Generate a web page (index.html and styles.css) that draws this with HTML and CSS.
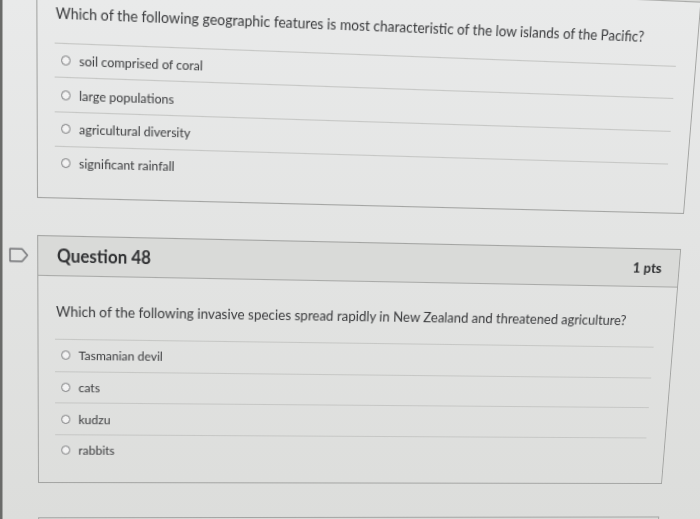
FILE: index.html
```html
<!DOCTYPE html>
<html lang="en">
<head>
<meta charset="utf-8">
<title>Quiz</title>
<link rel="stylesheet" href="styles.css">
</head>
<body>
<div class="screen">
  <section class="question">
    <div class="flag-col"></div>
    <div class="card card-first">
      <div class="card-header"></div>
      <div class="card-body">
        <p class="q-text">Which of the following geographic features is most characteristic of the low islands of the Pacific?</p>
        <ul class="answers">
          <li class="answer"><span class="radio"></span><span class="label">soil comprised of coral</span></li>
          <li class="answer"><span class="radio"></span><span class="label">large populations</span></li>
          <li class="answer"><span class="radio"></span><span class="label">agricultural diversity</span></li>
          <li class="answer"><span class="radio"></span><span class="label">significant rainfall</span></li>
        </ul>
      </div>
    </div>
  </section>
  <section class="question">
    <div class="flag-col">
      <svg class="flag" width="19" height="14" viewBox="0 0 19 14"><path d="M1 1.2 H12.5 L17.6 7 L12.5 12.8 H1 Z" fill="none" stroke="#727376" stroke-width="1.4" stroke-linejoin="round"/></svg>
    </div>
    <div class="card">
      <div class="card-header">
        <h2 class="q-title">Question 48</h2>
        <span class="pts">1 pts</span>
      </div>
      <div class="card-body">
        <p class="q-text">Which of the following invasive species spread rapidly in New Zealand and threatened agriculture?</p>
        <ul class="answers">
          <li class="answer"><span class="radio"></span><span class="label">Tasmanian devil</span></li>
          <li class="answer"><span class="radio"></span><span class="label">cats</span></li>
          <li class="answer"><span class="radio"></span><span class="label">kudzu</span></li>
          <li class="answer"><span class="radio"></span><span class="label">rabbits</span></li>
        </ul>
      </div>
    </div>
  </section>
  <section class="question">
    <div class="flag-col"></div>
    <div class="card">
      <div class="card-header"></div>
    </div>
  </section>
</div>
</body>
</html>
```
FILE: styles.css
```css
html {
  background-color: #e3e4e2;
  background-image:
    linear-gradient(90deg, #6a6b69 0, #6a6b69 2px, rgba(0,0,0,0) 3px),
    linear-gradient(#e9eaea, #dcdddb);
  height: 100%;
}
body {
  margin: 0;
  height: 519px;
  overflow: hidden;
}
.screen {
  width: 690px;
  height: 521px;
  overflow: hidden;
  display: flex;
  flex-direction: column;
  gap: 34px;
  font-family: Lato, "Noto Sans", sans-serif;
  color: #3a3b3d;
  transform-origin: 0 0;
  transform: matrix3d(1.090736, 0.0444631, 0, 0.000088571, 0.0095233, 1.160336, 0, 0.00014880, 0, 0, 1, 0, -5.18483, -42.7834, 0, 1);
  filter: blur(0.3px);
}
.question {
  display: flex;
  flex: none;
}
.flag-col {
  width: 38px;
  flex: none;
  box-sizing: border-box;
  padding: 12px 0 0 11px;
}
.flag {
  display: block;
}
.card {
  width: 650px;
  flex: none;
  box-sizing: border-box;
  border: 1px solid #a3a4a2;
}
.card-first {
  margin-top: -25.3px;
}
.card-header {
  height: 36px;
  display: flex;
  align-items: center;
  justify-content: space-between;
  padding: 0 18px;
  background: #d9dad8;
  border-bottom: 1px solid #a9aaa8;
}
.q-title {
  margin: 0;
  font-size: 16.5px;
  font-weight: 700;
  color: #2f3032;
}
.pts {
  font-size: 14px;
  font-weight: 700;
  color: #2f3032;
}
.card-body {
  padding: 23px 20px 15.4px 16px;
}
.q-text {
  margin: 0 0 16px;
  padding-left: 1px;
  font-size: 13.5px;
  line-height: 20px;
}
.answers {
  list-style: none;
  margin: 0;
  padding: 0;
}
.answer {
  display: flex;
  align-items: center;
  gap: 8px;
  height: 29.7px;
  padding-left: 6px;
  padding-bottom: 1px;
  box-sizing: content-box;
  border-top: 1px solid #c6c7c5;
  font-size: 12px;
}
.answer + .answer {
  margin-top: -1px;
}
.radio {
  width: 9px;
  height: 9px;
  flex: none;
  box-sizing: border-box;
  border-radius: 50%;
  border: 1.3px solid #7b7c7e;
  background: #f3f3f3;
}
```
